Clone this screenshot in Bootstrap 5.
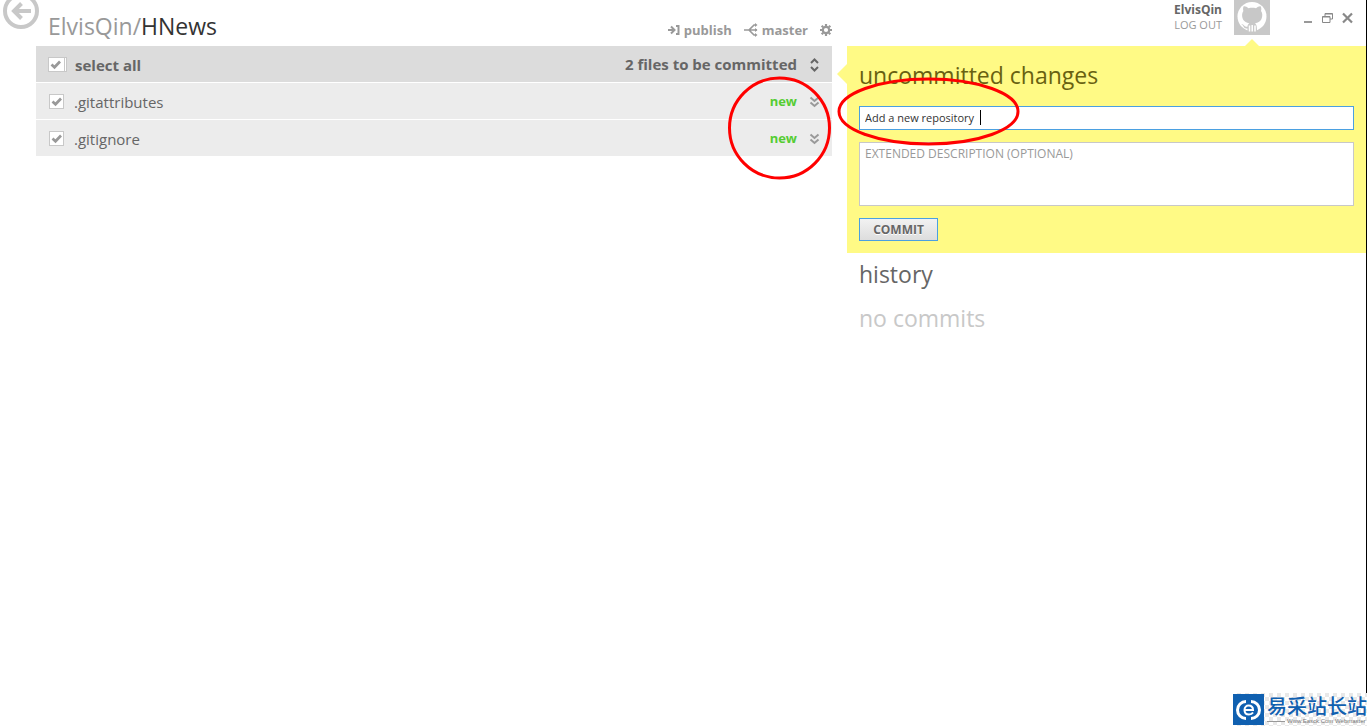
<!DOCTYPE html>
<html lang="en">
<head>
<meta charset="utf-8">
<meta name="viewport" content="width=device-width, initial-scale=1">
<title>ElvisQin/HNews</title>
<link href="https://cdn.jsdelivr.net/npm/bootstrap@5.3.0/dist/css/bootstrap.min.css" rel="stylesheet">
<style>
  body { font-family: "Open Sans", "Noto Sans", sans-serif; font-size: 12px; line-height: 16px; color: #666; background: #fff; }
  svg { display: block; }
  button { font-family: inherit; }
  .window { min-height: 100vh; }
  .window-edge { top: 0; right: 0; bottom: 33px; width: 1px; background: #000; }
  .back-rail { flex: 0 0 36px; min-width: 0; }
  .back-btn { width: 36px; height: 36px; margin: -7px 0 0 3px; }
  .files-pane { flex: 796 1 0; min-width: 0; }
  .commit-pane { flex: 519 1 0; min-width: 0; margin: 0 1px 0 15px; }
  .topbar { height: 46px; }
  .repo-title { font-size: 23px; line-height: 32px; color: #333; }
  .repo-title span { color: #999; }
  .tool { font-size: 13px; line-height: 18px; font-weight: 700; color: #999; }
  .tool-set { padding-bottom: 7px; }
  .file-list { font-size: 15px; line-height: 20px; }
  .file-row { height: 36px; padding: 1px 12px 0; background: #ececec; margin-top: 1px; }
  .file-row.all-row { background: #dcdcdc; font-weight: 700; margin-top: 0; }
  .file-row label { margin-left: 10px; }
  .row-status { margin: 0 12px 2px auto; }
  .tag-new { font-size: 13px; line-height: 18px; font-weight: 700; color: #5c3; }
  .check-box { appearance: none; flex: none; width: 15px; height: 15px; margin: 0 0 0 1px; border: 1px solid #c8c8c8;
    background: #fff url("data:image/svg+xml,%3Csvg xmlns='http://www.w3.org/2000/svg' viewBox='0 0 13 13'%3E%3Cpath d='M2.5 6.5L5.5 9.3L11 3.5' fill='none' stroke='%23999' stroke-width='2.7'/%3E%3C/svg%3E"); }
  .all-row .check-box { width: 19px; margin: 0 -2px 0 0; background-repeat: no-repeat; background-size: 13px 13px; box-shadow: inset -1px 0 #fff, inset -2px 0 #c8c8c8; }
  .account { margin-right: 12px; padding-top: 2px; }
  .log-out { font-size: 11px; line-height: 14px; color: #999; }
  .user-name { font-size: 12px; line-height: 16px; font-weight: 700; }
  .avatar { width: 36px; height: 35px; }
  .win-controls { margin: 12px 13px 0 32px; gap: 9px; }
  .commit-form { background: #fffa85; padding: 12px; color: #686111; }
  .pane-title { font-size: 23px; line-height: 36px; }
  .commit-form .pane-title, .history .pane-title { margin: -1px 0 13px; }
  .history .pane-title { margin-bottom: 8px; }
  .arrow-left { left: -10px; top: 18px; }
  .arrow-up { right: 107px; top: -7px; }
  .field { display: block; width: 100%; border: 1px solid #c8c8c8; border-radius: 0; background: #fff; padding: 3px 5px; font-size: 12px; line-height: 16px; color: #333; outline: 0; resize: none; }
  .field.summary { height: 24px; border-color: #4ba0e1; font-size: 11px; padding: 2px 5px 4px; }
  .field.details { height: 64px; margin: 12px 0; }
  .field::placeholder { color: #999; opacity: 1; }
  .caret { left: 121px; top: 4px; width: 1px; height: 15px; background: #000; }
  .commit-btn { width: 79px; height: 23px; padding: 0; border: 1px solid #4ba0e1; border-radius: 0; background: linear-gradient(#f2f2f2, #ddd); color: #666; font-size: 12px; line-height: 16px; font-weight: 700; text-shadow: 0 1px #fff; }
  .history { padding: 4px 12px; }
  .no-commits { color: #c8c8c8; line-height: 36px; font-size: 23px; }
  .ring { pointer-events: none; z-index: 2; }
  .ring-status { right: 0; top: 30px; }
  .ring-message { left: -10px; top: 31px; }
  .site-mark { right: 0; bottom: 0; width: 134px; height: 33px; font-family: "Noto Sans CJK SC", sans-serif; color: #1060b0;
    background: repeating-conic-gradient(#e8e8e8 0 25%, #fff 0 50%) 0 0 / 8px 8px; }
  .mark-text { padding-left: 3px; }
  .mark-name { font-size: 20px; line-height: 24px; font-weight: 500; }
  .mark-site { font-family: "Liberation Sans", sans-serif; font-size: 6px; line-height: 7px; color: #777; }
  .mark-site::before { content: ""; width: 18px; height: 1px; background: #999; margin-right: 2px; }
</style>
</head>
<body>
<div class="window position-relative d-flex align-items-start overflow-hidden">
  <nav class="back-rail">
    <button class="back-btn btn p-0 border-0" aria-label="Back">
      <svg width="36" height="36" viewBox="0 0 36 36" fill="none" stroke="#c8c8c8"><circle cx="18" cy="18" r="16" stroke-width="4"/><path d="M28 18H11M18.500 10.500L11 18L18.500 25.500" stroke-width="4"/></svg>
    </button>
  </nav>

  <main class="files-pane">
    <header class="topbar d-flex justify-content-between align-items-end ps-2 ms-1">
      <h1 class="repo-title fw-normal mb-1 text-nowrap"><span>ElvisQin/</span>HNews</h1>
      <div class="tool-set d-flex align-items-center">
        <button class="tool btn p-0 border-0 d-flex align-items-center">
          <svg class="me-1" width="13" height="12" viewBox="0 0 13 12" fill="none" stroke="#999" stroke-width="2"><path d="M1 6H7M4 2.500L7.500 6L4 9.500M9 2H11.500V10H9"/></svg>publish</button>
        <button class="tool btn p-0 border-0 d-flex align-items-center ms-2 ps-1">
          <svg class="me-1" width="14" height="14" viewBox="0 0 14 14" fill="none" stroke="#999" stroke-width="1.600"><path d="M0 7H13M12 2H10L5 7L10 12H12"/><path d="M11 0L13.500 2L11 4zM11 5L13.500 7L11 9zM11 10L13.500 12L11 14z" fill="#999" stroke="none"/></svg>master</button>
        <button class="btn p-0 border-0 ms-2 ps-1" aria-label="Settings">
          <svg width="12" height="12" viewBox="0 0 12 12" fill="none" stroke="#999"><circle cx="6" cy="6" r="3.200" stroke-width="2.200"/><path d="M6 0V2M6 10V12M0 6H2M10 6H12M1.700 1.700L3.200 3.200M8.800 8.800L10.300 10.300M10.300 1.700L8.800 3.200M3.200 8.800L1.700 10.300" stroke-width="2.200"/></svg>
        </button>
      </div>
    </header>

    <section class="file-list position-relative">
      <div class="file-row all-row d-flex align-items-center">
        <input class="check-box" type="checkbox" id="all" checked><label for="all">select all</label>
        <span class="row-status">2 files to be committed</span>
        <button class="btn p-0 border-0" aria-label="Expand all"><svg width="11" height="14" viewBox="0 0 11 14" fill="none" stroke="#666" stroke-width="2"><path d="M2 5L5.500 1.500L9 5M2 9L5.500 12.500L9 9"/></svg></button>
      </div>
      <div class="file-row d-flex align-items-center">
        <input class="check-box" type="checkbox" id="f1" checked><label for="f1">.gitattributes</label>
        <span class="tag-new row-status">new</span>
        <button class="btn p-0 border-0" aria-label="Show changes"><svg width="11" height="12" viewBox="0 0 11 12" fill="none" stroke="#999" stroke-width="2"><path d="M1.500 1.500L5.500 5L9.500 1.500M1.500 6.500L5.500 10L9.500 6.500"/></svg></button>
      </div>
      <div class="file-row d-flex align-items-center">
        <input class="check-box" type="checkbox" id="f2" checked><label for="f2">.gitignore</label>
        <span class="tag-new row-status">new</span>
        <button class="btn p-0 border-0" aria-label="Show changes"><svg width="11" height="12" viewBox="0 0 11 12" fill="none" stroke="#999" stroke-width="2"><path d="M1.500 1.500L5.500 5L9.500 1.500M1.500 6.500L5.500 10L9.500 6.500"/></svg></button>
      </div>
      <svg class="ring ring-status position-absolute" width="104" height="104" viewBox="0 0 104 104" fill="none" stroke="#f00" stroke-width="3"><circle cx="51.500" cy="52" r="50"/></svg>
    </section>
  </main>

  <aside class="commit-pane">
    <header class="topbar d-flex justify-content-end align-items-start">
      <div class="account text-end">
        <div class="user-name">ElvisQin</div>
        <button class="log-out btn p-0 border-0 d-block ms-auto">LOG OUT</button>
      </div>
      <svg class="avatar" viewBox="0 0 36 35"><path fill="#c8c8c8" d="M0 0H36V35H0z"/><circle cx="18" cy="16.500" r="14.500" fill="#fff"/><path fill="#c8c8c8" d="M9.500 6.500C11 6 13 7 14.500 8.300C17 7.700 19.500 7.700 22 8.300C23.500 7 25.500 6 26.800 6.500C27.500 8.200 27.500 9.700 27 11C28.500 13 28.600 15.500 27.800 18C26.800 21.500 24 22.800 21 23.300C22.500 24.500 23 26 23 31H13.500V28.500C11 29 10 27.500 9 25.500L7.300 24.300C9.500 23.800 10.500 26.500 12 26.800C13 27 13.500 26.700 13.500 26.500C13.500 25 14.500 24 15.400 23.300C12.500 22.800 9.500 21.500 8.500 18C7.800 15.500 8 13 9.400 11C9 9.500 8.900 8 9.500 6.500z"/><path d="M15.500 25.500V31.500M18.200 25V31.500M21 25.500V31.500" stroke="#fff" stroke-width="1.500"/></svg>
      <div class="win-controls d-flex">
        <button class="btn p-0 border-0" aria-label="Minimize"><svg width="11" height="12" viewBox="0 0 11 12"><path fill="#999" d="M2 9H10V11H2z"/></svg></button>
        <button class="btn p-0 border-0" aria-label="Restore"><svg width="11" height="12" viewBox="0 0 11 12" fill="none" stroke="#888"><path d="M3 4V1.500H10.500V7H8M3 2H10.500M.500 4.500H8V10.500H.500zM.500 5H8"/></svg></button>
        <button class="btn p-0 border-0" aria-label="Close"><svg width="11" height="12" viewBox="0 0 11 12" fill="none" stroke="#888" stroke-width="2.200"><path d="M1 1.500L10 10.500M10 1.500L1 10.500"/></svg></button>
      </div>
    </header>

    <form class="commit-form position-relative" onsubmit="return false">
      <svg class="arrow-left position-absolute" width="10" height="20" viewBox="0 0 10 20" fill="#fffa85"><path d="M0 10L10 0V20z"/></svg>
      <svg class="arrow-up position-absolute" width="14" height="7" viewBox="0 0 14 7" fill="#fffa85"><path d="M7 0L14 7H0z"/></svg>
      <h2 class="pane-title fw-normal">uncommitted changes</h2>
      <div class="position-relative">
        <input class="field summary" type="text" aria-label="Summary" value="Add a new repository">
        <span class="caret position-absolute"></span>
      </div>
      <textarea class="field details" aria-label="Extended description" placeholder="EXTENDED DESCRIPTION (OPTIONAL)"></textarea>
      <button class="commit-btn d-block">COMMIT</button>
      <svg class="ring ring-message position-absolute" width="183" height="69" viewBox="0 0 183 69" fill="none" stroke="#f00" stroke-width="3"><ellipse cx="91.500" cy="34.500" rx="89.500" ry="32.500"/></svg>
    </form>

    <section class="history">
      <h2 class="pane-title fw-normal">history</h2>
      <p class="no-commits mb-0">no commits</p>
    </section>
  </aside>

  <div class="window-edge position-absolute"></div>
  <div class="site-mark position-absolute d-flex align-items-center">
    <svg class="flex-shrink-0" width="31" height="31" viewBox="0 0 31 31"><path fill="#1060b0" d="M0 0H31V31H0z"/><path d="M13 7.500A8.500 8.500 0 0 0 13 24.500M18 7.500A8.500 8.500 0 0 1 18 24.500" fill="none" stroke="#fff" stroke-width="3"/><path d="M11 16H20C20 12.500 17.500 11.500 15.500 11.500S11.500 13 11.500 16S13.500 20.500 16 20.500S19 20 20 18.500" fill="none" stroke="#fff" stroke-width="2"/></svg>
    <div class="mark-text text-nowrap">
      <div class="mark-name">易采站长站</div>
      <div class="mark-site d-flex align-items-center">Www.Easck.Com Webmaster</div>
    </div>
  </div>
</div>
<script src="https://cdn.jsdelivr.net/npm/bootstrap@5.3.0/dist/js/bootstrap.bundle.min.js"></script>
</body>
</html>
